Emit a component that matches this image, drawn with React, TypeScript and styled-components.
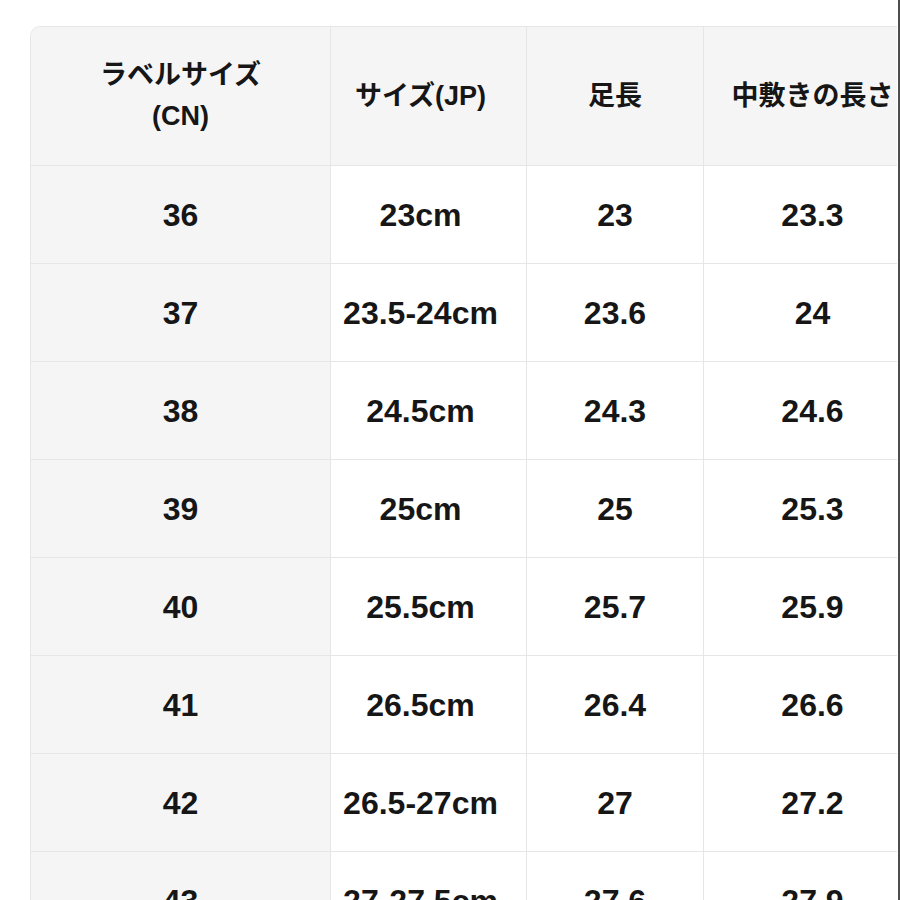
import React from 'react'
import styled, { createGlobalStyle } from 'styled-components'

const GlobalStyle = createGlobalStyle`
  html, body {
    margin: 0;
    padding: 0;
    background: #fff;
  }
  body {
    font-family: 'Liberation Sans', 'Noto Sans CJK JP', sans-serif;
    color: #161616;
  }
`

const Page = styled.div`
  box-sizing: border-box;
  width: 900px;
  height: 900px;
  overflow: hidden;
  padding: 26px 0 0 30px;
  border-right: 2px solid #4d4d4d;
`

const Table = styled.div`
  display: grid;
  grid-template-columns: 300px 196px 177px 194px;
  width: 867px;
  box-sizing: border-box;
  border-top: 1px solid #e6e6e6;
  border-left: 1px solid #e6e6e6;
  border-top-left-radius: 10px;
  overflow: hidden;
`

const Cell = styled.div<{ $head?: boolean; $shade?: boolean; $shift?: number }>`
  box-sizing: border-box;
  height: ${(p) => (p.$head ? 139 : 98)}px;
  display: flex;
  align-items: center;
  justify-content: center;
  text-align: center;
  white-space: nowrap;
  background: ${(p) => (p.$head || p.$shade ? '#f5f5f5' : '#fff')};
  border-right: 1px solid #e6e6e6;
  border-bottom: 1px solid #e6e6e6;
  font-weight: 700;
  font-size: ${(p) => (p.$head ? 27 : 32)}px;
  line-height: ${(p) => (p.$head ? 41 : 36)}px;
  padding-left: ${(p) => Math.max(p.$shift ?? 0, 0) * 2}px;
  padding-right: ${(p) => Math.max(-(p.$shift ?? 0), 0) * 2}px;
`

const shifts = [0, -8, 0, 12]

const headers = [
  <>ラベルサイズ<br />(CN)</>,
  'サイズ(JP)',
  '足長',
  '中敷きの長さ',
]

const rows = [
  ['36', '23cm', '23', '23.3'],
  ['37', '23.5-24cm', '23.6', '24'],
  ['38', '24.5cm', '24.3', '24.6'],
  ['39', '25cm', '25', '25.3'],
  ['40', '25.5cm', '25.7', '25.9'],
  ['41', '26.5cm', '26.4', '26.6'],
  ['42', '26.5-27cm', '27', '27.2'],
  ['43', '27-27.5cm', '27.6', '27.9'],
]

export default function App() {
  return (
    <Page>
      <GlobalStyle />
      <Table>
        {headers.map((h, i) => (
          <Cell key={i} $head $shift={shifts[i]}>
            <span>{h}</span>
          </Cell>
        ))}
        {rows.map((row) =>
          row.map((v, i) => (
            <Cell key={row[0] + i} $shade={i === 0} $shift={shifts[i]}>
              {v}
            </Cell>
          ))
        )}
      </Table>
    </Page>
  )
}
